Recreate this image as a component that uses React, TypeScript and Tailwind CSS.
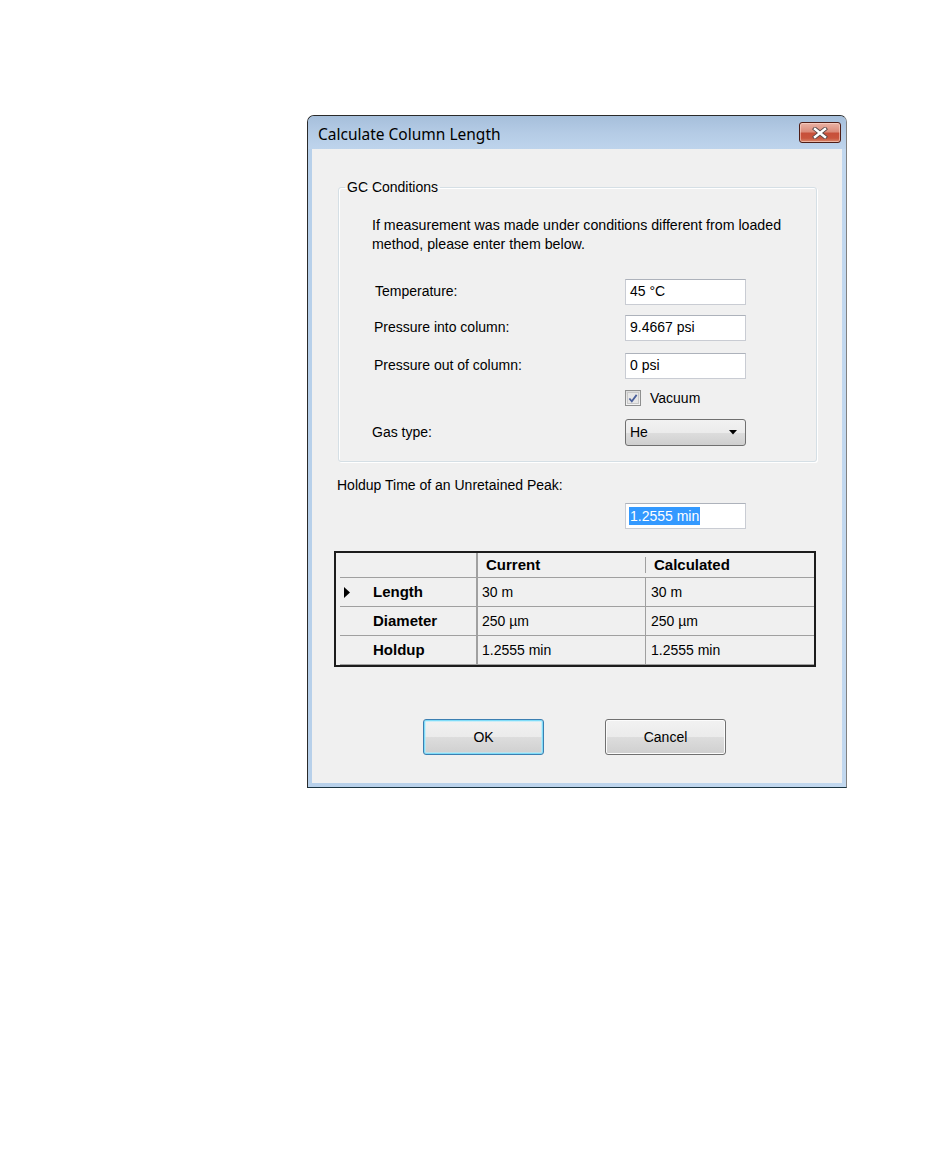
import React from "react";

const F = "font-['Liberation_Sans',Arial,sans-serif]";

const rows = [
  { name: "Length", cur: "30 m", calc: "30 m", arrow: true },
  { name: "Diameter", cur: "250 µm", calc: "250 µm", arrow: false },
  { name: "Holdup", cur: "1.2555 min", calc: "1.2555 min", arrow: false },
];

function TextBox({ value, selected = false }: { value: string; selected?: boolean }) {
  return (
    <div className="w-[121px] h-[26px] bg-white border border-[#c9ccd3] border-t-[#adb2bb] flex items-center pl-[3px]">
      {selected ? (
        <span className="bg-[#3399ff] text-white leading-[18px] px-[1px]">{value}</span>
      ) : (
        <span className="text-black pl-[1px]">{value}</span>
      )}
    </div>
  );
}

function CloseButton() {
  return (
    <div className="w-[42px] h-[21px] rounded-[3px] border border-[#4e1d16] bg-[linear-gradient(to_bottom,#eab3a6_0%,#dc8d7b_45%,#c7503a_55%,#c9553d_80%,#d98a6e_100%)] shadow-[inset_0_0_0_1px_rgba(255,220,210,0.55)] flex items-center justify-center">
      <svg width="16" height="12" viewBox="0 0 16 12">
        <path d="M3 2 L13 10 M13 2 L3 10" stroke="#5a4a4a" strokeWidth="4.2" strokeLinecap="square" />
        <path d="M3 2 L13 10 M13 2 L3 10" stroke="#ffffff" strokeWidth="2.4" strokeLinecap="square" />
      </svg>
    </div>
  );
}

function Checkbox() {
  return (
    <div className="w-[16px] h-[16px] border border-[#8e8f8f] bg-[linear-gradient(to_bottom,#dcdcdc,#f4f4f4)] flex items-center justify-center">
      <div className="w-[12px] h-[12px] border border-[#c8c8c8] bg-[#e6e6e6] flex items-center justify-center">
        <svg width="11" height="11" viewBox="0 0 11 11">
          <path d="M1.5 5.5 L4.2 8.6 L9.5 1.5" fill="none" stroke="#4a5f9a" strokeWidth="1.9" />
        </svg>
      </div>
    </div>
  );
}

export default function App() {
  return (
    <div className={`w-[950px] h-[1165px] bg-white pt-[115px] pl-[307px] ${F} text-[14px] text-black`}>
      <div className="w-[540px] h-[673px] rounded-t-[7px] border border-[#2a2a2a] border-r-[#808080] border-b-[#1a3340] bg-[#bcd5ee] flex flex-col overflow-hidden">
        {/* Title bar */}
        <div className="h-[33px] flex items-start justify-between pl-[10px] pr-[5px] bg-[linear-gradient(to_bottom,#a6bfdb_0%,#b4cbe5_50%,#bed4ec_100%)]">
          <span className="font-['Noto_Sans','Open_Sans',sans-serif] text-[15.5px] leading-[20px] mt-[8px] text-black">
            Calculate Column Length
          </span>
          <div className="mt-[6px]">
            <CloseButton />
          </div>
        </div>
        {/* Client area */}
        <div className="flex-1 px-[4px] pb-[4px] bg-[linear-gradient(to_right,#b7d0ea,#c2d8ef)]">
          <div className="w-full h-full bg-[#f0f0f0] flex flex-col">
            <fieldset className="mt-[29px] mx-[26px] w-[479px] border border-[#d5dfe5] rounded-[3px] pl-[33px] pr-[10px] pt-[20px] pb-[15px] shadow-[inset_1px_1px_0_#ffffff,1px_1px_0_#ffffff]">
              <legend className="-ml-[27px] px-[2px] leading-[18px]">GC Conditions</legend>
              <p className="leading-[19px] text-[14.2px]">
                If measurement was made under conditions different from loaded
                <br />
                method, please enter them below.
              </p>
              <div className="mt-[25px] flex items-center h-[25px]">
                <div className="w-[253px] pl-[3px]">Temperature:</div>
                <TextBox value="45 °C" />
              </div>
              <div className="mt-[11px] flex items-center h-[25px]">
                <div className="w-[253px] pl-[2px]">Pressure into column:</div>
                <TextBox value="9.4667 psi" />
              </div>
              <div className="mt-[13px] flex items-center h-[25px]">
                <div className="w-[253px] pl-[2px]">Pressure out of column:</div>
                <TextBox value="0 psi" />
              </div>
              <div className="mt-[12px] flex items-center h-[16px]">
                <div className="w-[253px]" />
                <Checkbox />
                <span className="ml-[9px]">Vacuum</span>
              </div>
              <div className="mt-[13px] flex items-center h-[27px]">
                <div className="w-[253px]">Gas type:</div>
                <div className="w-[121px] h-[27px] rounded-[3px] border border-[#707070] bg-[linear-gradient(to_bottom,#f2f2f2_0%,#ebebeb_50%,#dddddd_50%,#cfcfcf_100%)] flex items-center justify-between pl-[4px] pr-[8px]">
                  <span>He</span>
                  <svg width="8" height="5" viewBox="0 0 8 5">
                    <path d="M0 0 L8 0 L4 4.5 Z" fill="#000" />
                  </svg>
                </div>
              </div>
            </fieldset>

            <div className="mt-[14px] ml-[25px] leading-[18px]">Holdup Time of an Unretained Peak:</div>
            <div className="mt-[9px] ml-[313px]">
              <TextBox value="1.2555 min" selected />
            </div>

            {/* Table */}
            <div className="mt-[22px] ml-[22px] w-[482px] border-2 border-[#1c1c1c] bg-[#f0f0f0]">
              <div className="flex h-[25px]">
                <div className="w-[140px] pl-[4px] flex">
                  <div className="flex-1 border-b border-[#a0a0a0]" />
                </div>
                <div className="w-[2px] bg-[#a0a0a0]" />
                <div className="w-[167px] border-b border-[#a0a0a0] flex items-center pl-[8px] font-bold text-[15px]">
                  Current
                </div>
                <div className="w-[1px] flex flex-col border-b border-[#a0a0a0]">
                  <div className="flex-1 my-[4px] bg-[#a0a0a0]" />
                </div>
                <div className="flex-1 border-b border-[#a0a0a0] flex items-center pl-[8px] font-bold text-[15px]">
                  Calculated
                </div>
              </div>
              {rows.map((r) => (
                <div key={r.name} className="flex h-[29px]">
                  <div className="w-[140px] pl-[4px] flex">
                    <div className="flex-1 border-b border-[#a0a0a0] flex items-center">
                      <div className="w-[33px] pl-[4px] flex items-center">
                        {r.arrow && (
                          <svg width="6" height="11" viewBox="0 0 6 11">
                            <path d="M0 0 L6 5.5 L0 11 Z" fill="#000" />
                          </svg>
                        )}
                      </div>
                      <span className="font-bold text-[15px] mt-[1px]">{r.name}</span>
                    </div>
                  </div>
                  <div className="w-[2px] bg-[#a0a0a0]" />
                  <div className="w-[167px] border-b border-[#a0a0a0] flex items-center pl-[4px]">{r.cur}</div>
                  <div className="w-[1px] bg-[#a0a0a0]" />
                  <div className="flex-1 border-b border-[#a0a0a0] flex items-center pl-[5px]">{r.calc}</div>
                </div>
              ))}
            </div>

            {/* Buttons */}
            <div className="mt-[52px] ml-[111px] flex gap-[61px]">
              <button className="w-[121px] h-[36px] rounded-[3px] border border-[#3c7fb1] bg-[linear-gradient(to_bottom,#f2f2f2_0%,#ebebeb_50%,#dddddd_50%,#cfcfcf_100%)] shadow-[inset_0_0_0_1px_#7fdcf8,inset_0_0_0_2px_rgba(180,235,252,0.6)] text-[14px]">
                OK
              </button>
              <button className="w-[121px] h-[36px] rounded-[3px] border border-[#707070] bg-[linear-gradient(to_bottom,#f2f2f2_0%,#ebebeb_50%,#dddddd_50%,#cfcfcf_100%)] shadow-[inset_0_0_0_1px_#fcfcfc] text-[14px]">
                Cancel
              </button>
            </div>
          </div>
        </div>
      </div>
    </div>
  );
}
